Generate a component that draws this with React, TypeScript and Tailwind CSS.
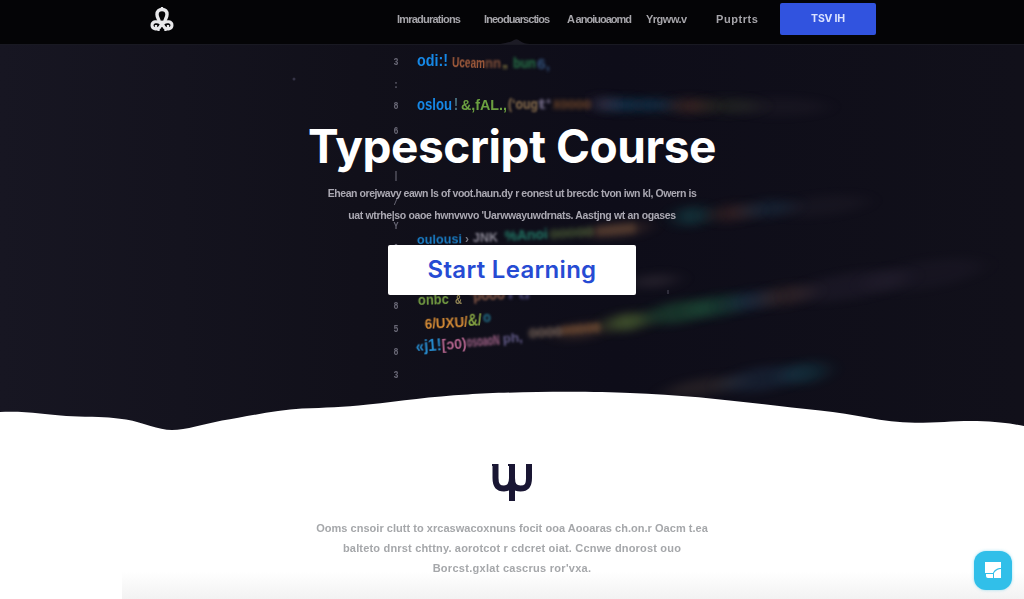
import React from "react";

type CodeToken = {
  text: string;
  x: number;
  y: number;
  width: number;
  color: string;
  size?: number;
  rotate?: number;
  blur?: number;
  opacity?: number;
};

const tokens: CodeToken[] = [
  { text: "odi:!", x: 417, y: 66, width: 31, color: "#1688e6", blur: 0.4 },
  { text: "Uceam", x: 452, y: 67, width: 33, color: "#a55d3c", rotate: 2, blur: 0.6, size: 14 },
  { text: "nn", x: 485, y: 68, width: 16, color: "#825039", blur: 1.1, size: 14 },
  { text: "„", x: 502, y: 67, width: 6, color: "#7d723e", blur: 1 },
  { text: "bun", x: 513, y: 68, width: 23, color: "#277649", blur: 1.5, size: 14 },
  { text: "6,", x: 537, y: 69, width: 13, color: "#315079", blur: 1.7, size: 14 },
  { text: "oslou", x: 417, y: 110, width: 35, color: "#1688e6", blur: 0.4 },
  { text: "!", x: 454, y: 110, width: 4, color: "#4d7889", blur: 0.5 },
  { text: "&,fAL.,", x: 461, y: 110, width: 46, color: "#6b9f40", blur: 0.6, size: 15 },
  { text: "(‘oug", x: 508, y: 109, width: 30, color: "#8c704e", blur: 1.2, size: 14 },
  { text: "t‘", x: 538, y: 109, width: 14, color: "#706883", blur: 1.4, size: 14 },
  { text: "xoooo", x: 553, y: 109, width: 38, color: "#764a2a", blur: 2.3 },
  { text: "oulousi", x: 417, y: 244, width: 45, color: "#197bc3", size: 13, blur: 0.5, rotate: -1 },
  { text: "›", x: 465, y: 243, width: 4, color: "#777781", size: 13, blur: 0.5 },
  { text: "JNK", x: 473, y: 242, width: 25, color: "#898693", size: 12, blur: 0.8, rotate: -1 },
  { text: "%Anoi", x: 505, y: 241, width: 43, color: "#227c68", blur: 1.8, rotate: -3, size: 14 },
  { text: "ooooo", x: 550, y: 239, width: 44, color: "#536739", blur: 2.5, rotate: -4 },
  { text: "ooooo", x: 596, y: 236, width: 40, color: "#745239", blur: 3, rotate: -5 },
  { text: "onbc", x: 418, y: 305, width: 31, color: "#719941", blur: 0.5, rotate: -2, size: 15 },
  { text: "&", x: 455, y: 304, width: 7, color: "#958756", blur: 0.7, size: 12 },
  { text: "‘pooo", x: 470, y: 301, width: 35, color: "#8b5b48", blur: 1.1, rotate: -3, size: 14 },
  { text: "i‘u", x: 508, y: 299, width: 22, color: "#4b4778", blur: 1.4, size: 13 },
  { text: "6/UXU/", x: 425, y: 329, width: 43, color: "#d58b35", blur: 0.6, rotate: -3, size: 15 },
  { text: "&/", x: 468, y: 326, width: 14, color: "#85a442", blur: 0.7, rotate: -3 },
  { text: "o", x: 483, y: 322, width: 8, color: "#23708a", blur: 0.8, size: 14 },
  { text: "«j1!", x: 416, y: 352, width: 26, color: "#2688c9", blur: 0.5, rotate: -4 },
  { text: "[ɔ0)", x: 442, y: 350, width: 25, color: "#b2638c", blur: 0.6, rotate: -4, size: 15 },
  { text: "osoaoN", x: 467, y: 347, width: 33, color: "#a16388", blur: 1, rotate: -4, size: 14 },
  { text: "ph,", x: 503, y: 343, width: 20, color: "#625b88", blur: 1.3, rotate: -4, size: 13 },
  { text: "oooo", x: 529, y: 338, width: 34, color: "#867061", blur: 2.1, rotate: -4 },
  { text: "ooooo", x: 562, y: 335, width: 39, color: "#8b5c39", blur: 2.7, rotate: -5 },
];

const streaks = [
  { x: 623, y: 105, rx: 18, ry: 7, color: "#174d70", opacity: 0.5, rotate: 0 },
  { x: 655, y: 105, rx: 18, ry: 7, color: "#194d70", opacity: 0.45, rotate: 0 },
  { x: 604, y: 104, rx: 7, ry: 8, color: "#5b4c69", opacity: 0.65, rotate: 0 },
  { x: 690, y: 106, rx: 19, ry: 8, color: "#59342a", opacity: 0.5, rotate: 0 },
  { x: 729, y: 106, rx: 30, ry: 8, color: "#37402b", opacity: 0.32, rotate: 0 },
  { x: 778, y: 107, rx: 48, ry: 9, color: "#3b303e", opacity: 0.17, rotate: 0 },
  { x: 618, y: 230, rx: 30, ry: 7, color: "#76503a", opacity: 0.35, rotate: -6 },
  { x: 692, y: 216, rx: 16, ry: 10, color: "#186064", opacity: 0.42, rotate: -6 },
  { x: 733, y: 213, rx: 22, ry: 9, color: "#63372e", opacity: 0.34, rotate: -6 },
  { x: 767, y: 209, rx: 27, ry: 9, color: "#214865", opacity: 0.28, rotate: -6 },
  { x: 822, y: 206, rx: 45, ry: 10, color: "#38323e", opacity: 0.17, rotate: -6 },
  { x: 654, y: 281, rx: 23, ry: 7, color: "#50444d", opacity: 0.3, rotate: -5 },
  { x: 582, y: 331, rx: 25, ry: 8, color: "#76523a", opacity: 0.3, rotate: -8 },
  { x: 627, y: 322, rx: 21, ry: 9, color: "#64803b", opacity: 0.55, rotate: -8 },
  { x: 680, y: 312, rx: 34, ry: 11, color: "#267044", opacity: 0.38, rotate: -9 },
  { x: 718, y: 306, rx: 26, ry: 11, color: "#206b4c", opacity: 0.32, rotate: -9 },
  { x: 750, y: 301, rx: 22, ry: 10, color: "#214568", opacity: 0.34, rotate: -9 },
  { x: 784, y: 296, rx: 29, ry: 10, color: "#5a3e35", opacity: 0.32, rotate: -9 },
  { x: 850, y: 286, rx: 60, ry: 13, color: "#3a3346", opacity: 0.22, rotate: -9 },
  { x: 924, y: 275, rx: 60, ry: 14, color: "#3a3346", opacity: 0.14, rotate: -9 },
  { x: 704, y: 387, rx: 40, ry: 9, color: "#57473c", opacity: 0.28, rotate: -9 },
  { x: 762, y: 379, rx: 40, ry: 12, color: "#264463", opacity: 0.28, rotate: -9 },
  { x: 805, y: 373, rx: 22, ry: 11, color: "#175c6b", opacity: 0.3, rotate: -9 },
];

const gutter = [60, 83, 104, 129, 174, 200, 224, 242, 304, 327, 350, 373];

function HeroBackground() {
  return (
    <svg className="pointer-events-none absolute inset-0 h-[440px] w-full" viewBox="0 0 1024 440" preserveAspectRatio="none" aria-hidden="true">
      <defs>
        <linearGradient id="night" x1="0" y1="0" x2="1" y2="0">
          <stop offset="0" stopColor="#171622" />
          <stop offset="0.35" stopColor="#11101a" />
          <stop offset="0.6" stopColor="#0e0d19" />
          <stop offset="1" stopColor="#11101a" />
        </linearGradient>
        <filter id="streak" x="-80%" y="-150%" width="260%" height="400%">
          <feGaussianBlur stdDeviation="10 4" />
        </filter>
      </defs>
      <rect width="1024" height="440" fill="url(#night)" />
      {streaks.map((s) => (
        <ellipse key={`${s.x}-${s.y}`} cx={s.x} cy={s.y} rx={s.rx} ry={s.ry} fill={s.color} opacity={s.opacity} transform={`rotate(${s.rotate} ${s.x} ${s.y})`} filter="url(#streak)" />
      ))}
      {gutter.map((y, i) => (
        <text key={y} x="393.500" y={y + 4.5} fontSize="11" textLength="5" lengthAdjust="spacingAndGlyphs" fontFamily="Liberation Mono, monospace" fontWeight="bold" fill="#686775" style={{ filter: "blur(.7px)" }}>
          {["3", ":", "8", "6", "|", "/", "Y", "-", "8", "5", "8", "3"][i]}
        </text>
      ))}
      {tokens.map((t) => (
        <text key={`${t.x}-${t.y}`} x={t.x} y={t.y} textLength={t.width} lengthAdjust="spacingAndGlyphs" fontSize={t.size ?? 16} fontFamily="Liberation Sans, sans-serif" fontWeight="bold" fill={t.color} transform={`rotate(${t.rotate ?? 0} ${t.x} ${t.y})`} style={{ filter: `blur(${t.blur ?? 0}px)` }}>
          {t.text}
        </text>
      ))}
      <circle cx="294" cy="79" r="1.5" fill="#353346" />
      <path d="M668 290v4" stroke="#454352" strokeWidth="1.2" />
      <path d="M0 412C14 411.500 27 412 40 413.500C53 415 67 416.500 85 416.700C105 416.800 115 418 126 419.500C144 422.500 158 430 172 430C186 430 204 424 222 420.500C245 417 275 410 302 408.500C326 407.500 342 407.500 368 404.500C402 401 430 396.500 468 394.500C510 391.500 590 391 630 393C698 395 764 405 820 410.500C855 414 882 422.500 915 422.700C940 422.700 956 420.500 977 421C998 421.500 1014 424 1024 426V440H0Z" fill="#fff" />
    </svg>
  );
}

function KnotLogo() {
  return (
    <svg className="h-[27px] w-[26px]" viewBox="0 0 26 27" fill="none" stroke="#e9e9eb" aria-label="Home">
      <path d="M10.500 17c0-3.500-2.500-5-2.500-8.500 0-3.200 2-5 5-5s5 1.800 5 5c0 3.500-2.500 5-2.500 8.500" strokeWidth="3.400" />
      <path d="M11.500 17c-3-2.200-8.500-1.800-8.500 2.200 0 3.800 5 5 7.700 2.200L13 17l2.300 4.400C18 24.200 23 23 23 19.200c0-4-5.500-4.400-8.500-2.200" strokeWidth="3" />
      <path d="M7 19v4M19 19v4M9.500 22v3M16.500 22v3M13 1v3M13 15v6" strokeWidth="2.300" />
    </svg>
  );
}

export default function App() {
  return (
    <div className="relative flex h-[599px] w-full flex-col overflow-hidden bg-white font-['Inter',sans-serif]">
      <header className="relative z-10 flex h-[45px] shrink-0 items-start border-b border-[#191922] bg-[#040406]">
        <a className="ml-[149px] mt-[6px] w-[26px] blur-[0.3px]" href="#home"><KnotLogo /></a>
        <nav className="ml-[222px] flex h-[38px] items-center whitespace-nowrap font-['Liberation_Sans',sans-serif] text-[11px] font-bold text-[#a6a5aa] blur-[0.5px]">
          <a className="w-[87px] tracking-[-0.78px]" href="#introduction">Imradurations</a>
          <a className="w-[83px] tracking-[-0.93px]" href="#introductions">Ineoduarsctios</a>
          <a className="w-[79px] tracking-[-1px]" href="#assessment">A anoiuoaomd</a>
          <a className="w-[70px] tracking-[-0.5px]" href="#topics">Yrgww.v</a>
          <a className="w-[64px] tracking-[0.55px]" href="#projects">Puptrts</a>
        </nav>
        <button className="mt-[3px] h-[32px] w-[96px] rounded-[2px] bg-[#3153df] text-[10.5px] font-bold text-[#dce3ff]"><span className="inline-block tracking-[-0.2px] blur-[0.4px]">TSV IH</span></button>
        <svg className="absolute top-[38px] left-[500px] h-[7px] w-[30px]" viewBox="0 0 30 7" aria-hidden="true">
          <path d="M0 6q9-1 14-4 3-2 6 1 4 3 10 3z" fill="#1c1b25" />
        </svg>
      </header>

      <main className="flex flex-1 flex-col">
        <section className="flex h-[387px] shrink-0 flex-col items-center">
          <HeroBackground />
          <h1 className="relative mt-[73px] whitespace-nowrap text-[46px] leading-[56px] font-bold tracking-[-0.45px] text-white">Typescript Course</h1>
          <div className="relative mt-[9px] flex flex-col items-center whitespace-nowrap font-['Liberation_Sans',sans-serif] text-[10.5px] leading-[21.500px] font-bold text-[#aaa8b2] blur-[0.45px]">
            <p className="tracking-[-0.43px]">Ehean orejwavy eawn Is of voot.haun.dy r eonest ut brecdc tvon iwn kl, Owern is</p>
            <p className="tracking-[-0.35px]">uat wtrhe|so oaoe hwnvwvo 'Uarwwayuwdrnats. Aastjng wt an ogases</p>
          </div>
          <button className="relative mt-[19px] h-[50px] w-[248px] rounded-[2px] bg-white text-[24px] font-semibold tracking-[0.3px] text-[#264bd3]">Start Learning</button>
        </section>
        <section className="relative flex flex-1 flex-col items-center">
          <svg className="mt-[31px] h-[38px] w-[42px]" viewBox="0 0 42 38" fill="none" stroke="#191633" strokeWidth="6" aria-hidden="true">
            <path d="M4.500 1v14c0 8 3 10.500 8.500 10.500S21 22 21 15V1v37M21 15c0 7 2.500 10.500 8.500 10.500s8.500-2.500 8.500-10.500V1" />
            <path d="M1 2h6M35 2h6M17 2h7" strokeWidth="2" />
          </svg>
          <div className="mt-[17px] flex flex-col items-center whitespace-nowrap font-['Liberation_Sans',sans-serif] text-[11px] leading-[20px] font-bold text-[#a5a7aa] blur-[0.65px]">
            <p className="tracking-[0.03px]">Ooms cnsoir clutt to xrcaswacoxnuns focit ooa Aooaras ch.on.r Oacm t.ea</p>
            <p className="tracking-[0.18px]">balteto dnrst chttny. aorotcot r cdcret oiat. Ccnwe dnorost ouo</p>
            <p className="tracking-[0.28px]">Borcst.gxlat cascrus ror'vxa.</p>
          </div>
        </section>
      </main>

      <div className="pointer-events-none absolute right-0 bottom-0 h-[27px] w-[902px] bg-gradient-to-b from-transparent to-[#f2f2f2]" />
      <button className="absolute right-[12px] bottom-[9px] flex h-[39px] w-[38px] items-center justify-center rounded-[12px] bg-[#31bfe9] shadow-[0_0_3px_rgba(49,191,233,0.5)]" aria-label="Open chat">
        <svg className="h-[17px] w-[18px]" viewBox="0 0 18 17" fill="#fff" aria-hidden="true">
          <path d="M1 0h16v6c-4 0-7 2-8 5H1z" />
          <path d="M2 12h7v4H4q-2 0-2-2zM10 16V11q3-4 7-4v9z" />
        </svg>
      </button>
    </div>
  );
}
